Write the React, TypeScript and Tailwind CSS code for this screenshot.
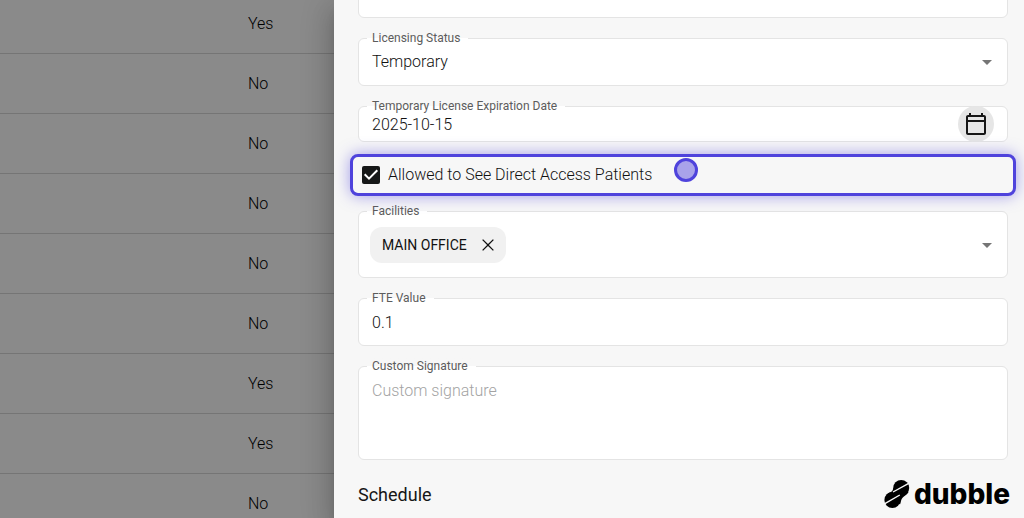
import type { ReactNode } from 'react';

const rows = ['Yes', 'No', 'No', 'No', 'No', 'No', 'Yes', 'Yes', 'No'];

const fieldBox = 'relative rounded-md border border-[#e4e4e4] bg-white';
const textStyle = 'w-full bg-transparent px-[13px] text-base font-light text-[#111] outline-none';

function Field({ id, label, className, children }: { id: string; label: string; className: string; children: ReactNode }) {
  return (
    <div className={`${fieldBox} ${className}`}>
      <label
        htmlFor={id}
        className="absolute -top-[9px] left-2 bg-linear-to-b from-[#f7f7f7] from-50% to-white to-50% pr-2 pl-[5px] text-xs leading-4 whitespace-nowrap text-[#5c5c5c]"
      >
        {label}
      </label>
      {children}
    </div>
  );
}

function Caret() {
  return (
    <svg viewBox="0 0 24 24" className="pointer-events-none mr-2 size-6 shrink-0 fill-[#757575]" aria-hidden="true">
      <path d="M7 10l5 5 5-5z" />
    </svg>
  );
}

function CalendarIcon() {
  return (
    <svg viewBox="0 0 24 24" className="size-6 fill-[#161616]" aria-hidden="true">
      <path d="M20 3h-1V1h-2v2H7V1H5v2H4c-1.1 0-2 .9-2 2v16c0 1.1.9 2 2 2h16c1.1 0 2-.9 2-2V5c0-1.1-.9-2-2-2m0 18H4V10h16zm0-13H4V5h16z" />
    </svg>
  );
}

function Brand() {
  return (
    <div className="absolute right-3.5 bottom-2 flex items-center gap-1 text-black">
      <svg viewBox="0 0 26 28" className="h-7 w-[26px]" aria-hidden="true">
        <circle cx="17.200" cy="8" r="8" />
        <circle cx="8.400" cy="20" r="8" />
        <path d="M9.200 8C9 12 6.500 12 3.500 13.700L16 24.500c1.300-2.500.4-5 3.600-7.800 1.700-1.400 3.700-2.200 5-4.700z" />
        <path d="M26 2.600 9 12M-.5 24.400 15.800 15" fill="none" stroke="#f7f7f7" strokeWidth="1.400" />
      </svg>
      <span className="font-['Inter',sans-serif] text-[28px] leading-8 font-extrabold">dubble</span>
    </div>
  );
}

export default function App() {
  return (
    <div className="relative flex h-screen overflow-hidden bg-[#8a8a8a] font-['Roboto',sans-serif]">
      <main className="w-[334px] shrink-0">
        <table className="-mt-1.5 w-full border-separate border-spacing-0">
          <tbody>
            {rows.map((value, i) => (
              <tr key={i}>
                <td className="h-15 border-b border-[#757575] py-0 pr-0 pl-[248px] text-left align-middle text-base font-light text-black">
                  {value}
                </td>
              </tr>
            ))}
          </tbody>
        </table>
      </main>

      <aside className="relative min-w-0 flex-1 bg-[#f7f7f7] shadow-[0_8px_10px_-5px_rgba(0,0,0,0.2),0_16px_24px_2px_rgba(0,0,0,0.14),0_6px_30px_5px_rgba(0,0,0,0.12)]">
        <div className="h-full overflow-hidden">
          <form className="-mt-[30px] flex flex-col pr-4 pl-6">
            <div className={`${fieldBox} mb-5 flex h-12`}>
              <input aria-label="License Number" className={textStyle} />
            </div>

            <Field id="status" label="Licensing Status" className="mb-5 flex h-12 items-center">
              <select id="status" className={`${textStyle} h-full appearance-none`}>
                <option>Temporary</option>
              </select>
              <Caret />
            </Field>

            <Field id="expiry" label="Temporary License Expiration Date" className="flex h-9 items-center">
              <input id="expiry" defaultValue="2025-10-15" className={`${textStyle} h-full`} />
              <button type="button" aria-label="Choose date" className="mr-[13px] flex size-9 shrink-0 items-center justify-center rounded-full bg-[#e6e6e6]">
                <CalendarIcon />
              </button>
            </Field>

            <div className="relative z-10 -mx-2 mt-3 mb-[15px] flex h-[42px] items-center rounded-lg border-3 border-[#4f43dc] bg-[#f7f7f7] pl-[9px] shadow-[0_0_15px_rgba(79,67,220,0.5)]">
              <label className="flex items-center gap-2 text-base font-light text-[#111]">
                <span className="relative flex size-[18px]">
                  <input type="checkbox" defaultChecked className="size-full appearance-none rounded-xs bg-[#161818]" />
                  <svg viewBox="0 0 18 18" className="pointer-events-none absolute inset-0" fill="none" stroke="#fff" strokeWidth="2" aria-hidden="true">
                    <path d="M2.700 8.300 7 12.600l8.300-8.300" />
                  </svg>
                </span>
                Allowed to See Direct Access Patients
              </label>
              <span className="absolute top-px left-[321px] size-6 rounded-full border-3 border-[#4f43dc] bg-[#a9a3ea]" />
            </div>

            <Field id="facilities" label="Facilities" className="mb-5 flex h-[67px] items-center">
              <div className="ml-[11px] flex h-9 shrink-0 items-center gap-[11px] rounded-xl bg-[#f1f1f1] pr-2 pl-3 text-sm whitespace-nowrap text-[#111]">
                MAIN OFFICE
                <button type="button" aria-label="Remove MAIN OFFICE">
                  <svg viewBox="0 0 24 24" className="size-5 fill-[#111]" aria-hidden="true">
                    <path d="M19 6.100 17.900 5 12 10.900 6.100 5 5 6.100l5.900 5.900L5 17.900 6.100 19l5.900-5.900 5.900 5.900 1.100-1.100-5.900-5.900z" />
                  </svg>
                </button>
              </div>
              <input id="facilities" className="h-full min-w-0 flex-1 bg-transparent px-2 outline-none" />
              <Caret />
            </Field>

            <Field id="fte" label="FTE Value" className="mb-5 flex h-12 items-center">
              <input id="fte" defaultValue="0.1" className={`${textStyle} h-full`} />
            </Field>

            <Field id="signature" label="Custom Signature" className="mb-5 flex h-[94px]">
              <textarea
                id="signature"
                placeholder="Custom signature"
                className={`${textStyle} resize-none pt-3 placeholder:text-[#a3a3a3]`}
              />
            </Field>

            <h2 className="text-lg leading-[30px] font-normal text-[#161616]">Schedule</h2>
          </form>
        </div>
      </aside>

      <Brand />
    </div>
  );
}
